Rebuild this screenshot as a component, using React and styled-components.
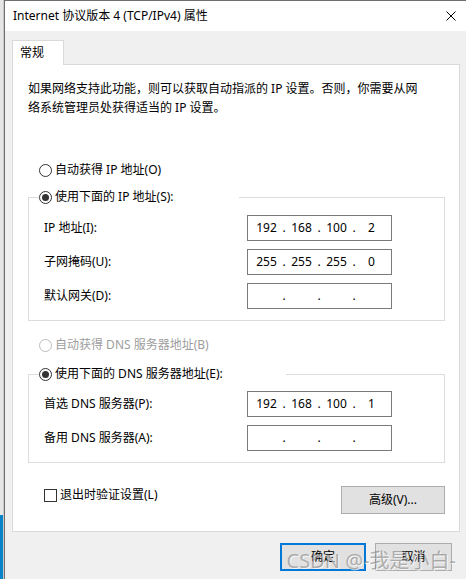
import React from "react";
import styled, { createGlobalStyle } from "styled-components";

const GlobalStyle = createGlobalStyle`
    * {
        box-sizing: border-box;
    }
    body {
        margin: 0;
        font-family: "Noto Sans", "Noto Sans CJK SC", sans-serif;
        font-size: 12px;
        color: #000;
        background: #f0f0f0;
    }
`;

const Screen = styled.div`
    display: flex;
    width: 466px;
    height: 579px;
    overflow: hidden;
`;

const BehindStrip = styled.div`
    width: 4px;
    flex-shrink: 0;
    background: linear-gradient(
        to bottom,
        #e6e6e6 0,
        #e6e6e6 515px,
        #0a84c8 515px
    );
    border-right: 1px solid #c9c9c9;
`;

const Window = styled.div`
    flex: 1;
    display: flex;
    flex-direction: column;
    border-left: 1px solid #6e6e6e;
    border-top: 1px solid #6e6e6e;
    background: #f0f0f0;
`;

const TitleBar = styled.div`
    height: 30px;
    background: #fff;
    display: flex;
    align-items: center;
    justify-content: space-between;
    padding: 0 8px 1px 8px;
    line-height: 16px;
`;

const CloseButton = styled.div`
    width: 10px;
    height: 10px;
    margin-right: 2px;
    display: flex;
`;

const Body = styled.div`
    flex: 1;
    position: relative;
    padding: 9px 0 0 7px;
`;

const TabStrip = styled.div`
    display: flex;
`;

const Tab = styled.div`
    position: relative;
    z-index: 1;
    width: 52px;
    height: 25px;
    margin-bottom: -1px;
    padding: 3px 0 0 7px;
    line-height: 18px;
    background: #fff;
    border: 1px solid #d9d9d9;
    border-bottom: none;
`;

const Panel = styled.div`
    width: 448px;
    background: #fff;
    border: 1px solid #d9d9d9;
    padding: 14px 14px 17px 15px;
`;

const Description = styled.p`
    margin: 0;
    line-height: 19px;
    white-space: nowrap;
`;

const RadioLabel = styled.label`
    display: flex;
    align-items: center;
    gap: 3px;
    height: 16px;
    line-height: 16px;
    margin-top: ${(p) => p.$top || 0}px;
    padding-left: ${(p) => p.$indent || 0}px;
    color: ${(p) => (p.$disabled ? "#9d9d9d" : "#000")};
    white-space: nowrap;
`;

const RadioDot = styled.span`
    width: 13px;
    height: 13px;
    flex-shrink: 0;
    border-radius: 50%;
    border: 1px solid ${(p) => (p.$disabled ? "#bcbcbc" : "#333")};
    background: #fff;
    display: flex;
    align-items: center;
    justify-content: center;

    &::after {
        content: "";
        width: 7px;
        height: 7px;
        border-radius: 50%;
        background: #333;
        display: ${(p) => (p.$checked ? "block" : "none")};
    }
`;

const Group = styled.fieldset`
    margin: ${(p) => p.$top}px 0 0;
    padding: 0 0 11px;
    border: 1px solid #dcdcdc;
    min-width: 0;
`;

const Legend = styled.legend`
    width: ${(p) => p.$width}px;
    margin-left: 10px;
    padding: 0;
`;

const Fields = styled.div`
    display: grid;
    grid-template-columns: 1fr 145px;
    row-gap: 8px;
    align-items: center;
    padding: ${(p) => p.$top}px 52px 0 15px;
`;

const FieldLabel = styled.span`
    line-height: 16px;
    white-space: nowrap;
`;

const IpBox = styled.div`
    height: 26px;
    border: 1px solid #7a7a7a;
    background: #fff;
    display: flex;
    align-items: center;
    padding: 0 0 1px 3px;
    font-size: 12px;
`;

const Octet = styled.span`
    width: 31px;
    text-align: center;
`;

const Dot = styled.span`
    width: 4px;
    display: flex;
    justify-content: center;
`;

const Footer = styled.div`
    display: flex;
    justify-content: space-between;
    align-items: flex-start;
    margin-top: 23px;
    padding-left: 16px;
`;

const CheckLabel = styled.label`
    display: flex;
    align-items: center;
    gap: 3px;
    height: 16px;
    line-height: 16px;
    margin-top: 1px;
`;

const CheckBox = styled.span`
    width: 13px;
    height: 13px;
    border: 1px solid #333;
    background: #fff;
`;

const Button = styled.button`
    width: ${(p) => p.$width}px;
    height: 28px;
    padding: 0;
    font: inherit;
    line-height: 16px;
    color: #000;
    background: #e1e1e1;
    border: ${(p) => (p.$primary ? "2px solid #0078d7" : "1px solid #adadad")};
`;

const ButtonRow = styled.div`
    display: flex;
    justify-content: flex-end;
    gap: 9px;
    margin-top: 11px;
    padding-right: 14px;
`;

const Watermark = styled.div`
    position: absolute;
    right: 10px;
    bottom: 5px;
    font-family: "Noto Sans", "Noto Sans CJK SC", sans-serif;
    font-size: 20px;
    line-height: 26px;
    color: rgba(110, 110, 110, 0.5);
    text-shadow: 1px 1px 0 rgba(255, 255, 255, 0.7);
    pointer-events: none;
    white-space: nowrap;
`;

const Radio = ({ checked, disabled, top, indent, children }) => (
    <RadioLabel $top={top} $indent={indent} $disabled={disabled}>
        <RadioDot $checked={checked} $disabled={disabled} />
        {children}
    </RadioLabel>
);

const IpField = ({ value }) => {
    const parts = value ? value.split(".") : ["", "", "", ""];
    return (
        <IpBox>
            {parts.map((part, i) => (
                <React.Fragment key={i}>
                    <Octet>{part}</Octet>
                    {i < 3 && <Dot>.</Dot>}
                </React.Fragment>
            ))}
        </IpBox>
    );
};

const ipRows = [
    { label: "IP 地址(I):", value: "192.168.100.2" },
    { label: "子网掩码(U):", value: "255.255.255.0" },
    { label: "默认网关(D):", value: "" },
];

const dnsRows = [
    { label: "首选 DNS 服务器(P):", value: "192.168.100.1" },
    { label: "备用 DNS 服务器(A):", value: "" },
];

const FieldRows = ({ rows }) =>
    rows.map((row) => (
        <React.Fragment key={row.label}>
            <FieldLabel>{row.label}</FieldLabel>
            <IpField value={row.value} />
        </React.Fragment>
    ));

const App = () => {
    return (
        <>
            <GlobalStyle />
            <Screen>
                <BehindStrip />
                <Window>
                    <TitleBar>
                        <span>Internet 协议版本 4 (TCP/IPv4) 属性</span>
                        <CloseButton>
                            <svg width="10" height="10" viewBox="0 0 10 10">
                                <path
                                    d="M0.5 0.5 L9.5 9.5 M9.5 0.5 L0.5 9.5"
                                    stroke="#000"
                                    strokeWidth="1"
                                />
                            </svg>
                        </CloseButton>
                    </TitleBar>
                    <Body>
                        <TabStrip>
                            <Tab>常规</Tab>
                        </TabStrip>
                        <Panel>
                            <Description>
                                如果网络支持此功能，则可以获取自动指派的 IP 设置。否则，你需要从网
                                <br />
                                络系统管理员处获得适当的 IP 设置。
                            </Description>

                            <Radio top={45} indent={11}>
                                自动获得 IP 地址(O)
                            </Radio>
                            <Group $top={11}>
                                <Legend $width={200}>
                                    <Radio checked>使用下面的 IP 地址(S):</Radio>
                                </Legend>
                                <Fields $top={10}>
                                    <FieldRows rows={ipRows} />
                                </Fields>
                            </Group>

                            <Radio top={16} indent={11} disabled>
                                自动获得 DNS 服务器地址(B)
                            </Radio>
                            <Group $top={13}>
                                <Legend $width={247}>
                                    <Radio checked>使用下面的 DNS 服务器地址(E):</Radio>
                                </Legend>
                                <Fields $top={9}>
                                    <FieldRows rows={dnsRows} />
                                </Fields>
                            </Group>

                            <Footer>
                                <CheckLabel>
                                    <CheckBox />
                                    退出时验证设置(L)
                                </CheckLabel>
                                <Button $width={104}>高级(V)...</Button>
                            </Footer>
                        </Panel>
                        <ButtonRow>
                            <Button $width={86} $primary>
                                确定
                            </Button>
                            <Button $width={77}>取消</Button>
                        </ButtonRow>
                        <Watermark>CSDN @-我是小白-</Watermark>
                    </Body>
                </Window>
            </Screen>
        </>
    );
};

export default App;
